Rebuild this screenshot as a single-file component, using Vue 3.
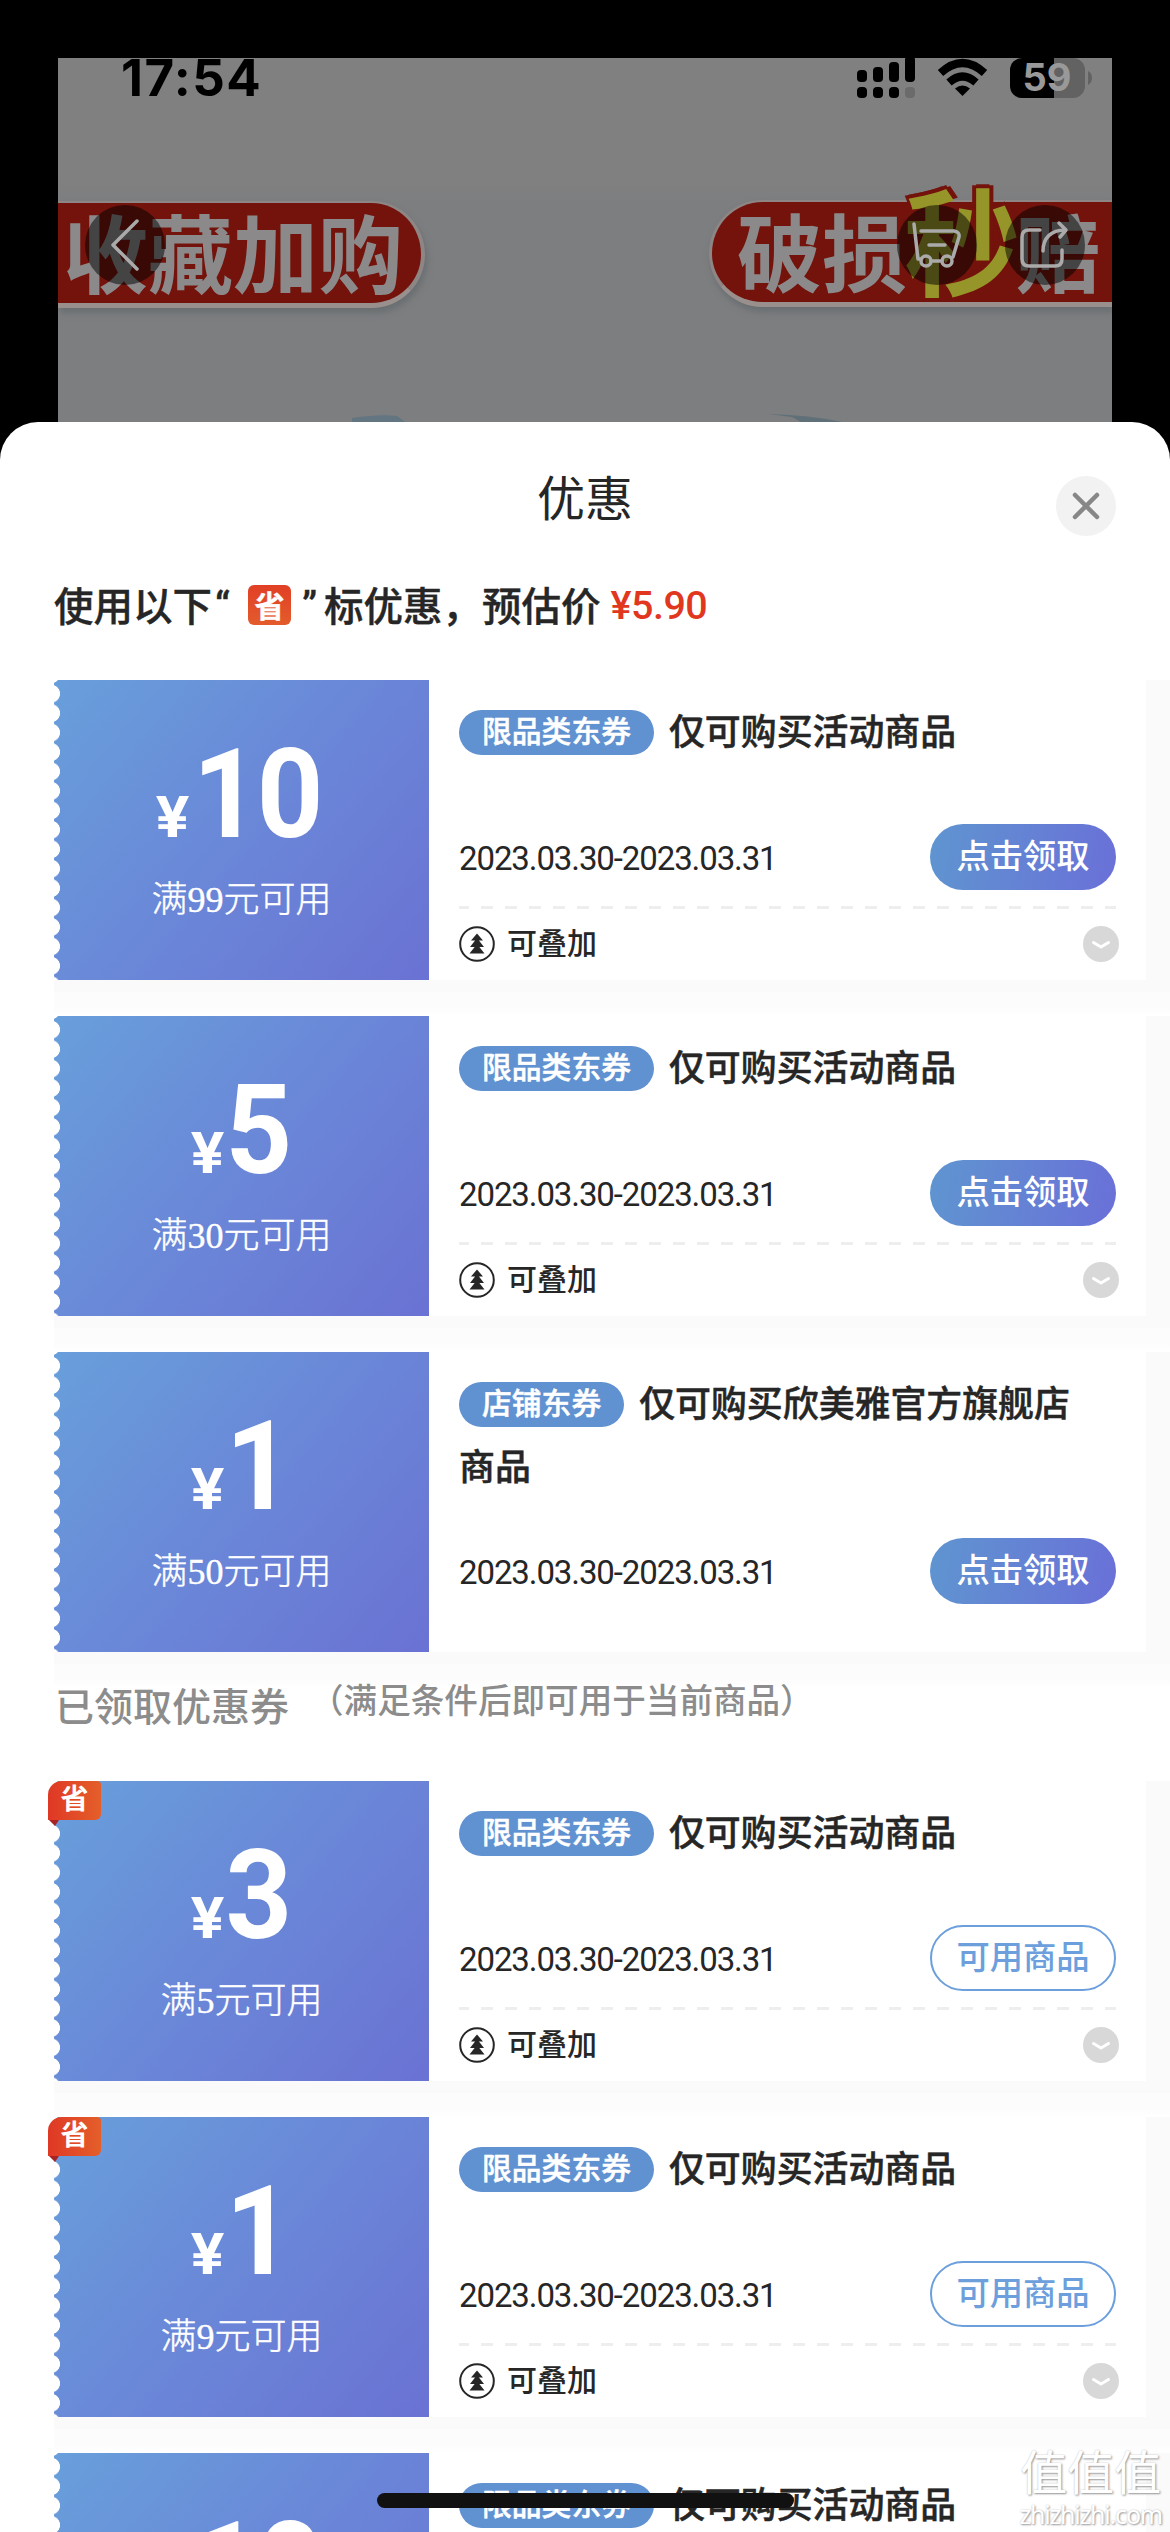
<script setup>
import { ref } from 'vue'

// Cupones por reclamar
const disponibles = ref([
  { id: 1, valor: 10, minimo: 99, tipo: '限品类东券', titulo: '仅可购买活动商品', apilable: true },
  { id: 2, valor: 5, minimo: 30, tipo: '限品类东券', titulo: '仅可购买活动商品', apilable: true },
  { id: 3, valor: 1, minimo: 50, tipo: '店铺东券', titulo: '仅可购买欣美雅官方旗舰店商品', apilable: false }
])

// Cupones ya reclamados
const reclamados = ref([
  { id: 4, valor: 3, minimo: 5, tipo: '限品类东券', titulo: '仅可购买活动商品', apilable: true, ahorro: true },
  { id: 5, valor: 1, minimo: 9, tipo: '限品类东券', titulo: '仅可购买活动商品', apilable: true, ahorro: true },
  { id: 6, valor: 10, minimo: 99, tipo: '限品类东券', titulo: '仅可购买活动商品', apilable: true }
])

const grupos = [
  { nombre: 'disponibles', cupones: disponibles, boton: '点击领取' },
  { nombre: 'reclamados', cupones: reclamados, boton: '可用商品' }
]

const fechas = '2023.03.30-2023.03.31'
</script>

<template>
  <div class="pantalla">
    <!-- Fondo oscurecido -->
    <div class="fondo">
      <div class="estado">
        <span class="hora">17:54</span>
        <svg class="iconos" width="236" height="42" viewBox="856 58 236 42">
          <g fill="#000">
            <rect x="856" y="70" width="10" height="12" rx="4" />
            <rect x="872" y="67" width="10" height="15" rx="4" />
            <rect x="888" y="62" width="10" height="20" rx="4" />
            <rect x="904" y="56" width="10" height="26" rx="4" />
            <rect x="856" y="87" width="10" height="11" rx="4" />
            <rect x="872" y="87" width="10" height="11" rx="4" />
            <rect x="888" y="87" width="10" height="11" rx="4" />
          </g>
          <rect x="904" y="87" width="10" height="11" rx="4" fill="#6b6b6b" />
          <g fill="none" stroke="#000" stroke-width="8">
            <path d="M939.500 73 Q961.500 53 983.500 73" />
            <path d="M948 82.500 Q961.500 70.500 975 82.500" />
          </g>
          <path d="M954 88.500 Q961.500 82.500 969 88.500 L961.500 96 Z" fill="#000" />
          <path d="M1021 58 H1072 a12 12 0 0 1 12 12 V86 a12 12 0 0 1 -12 12 H1053 V58 Z" fill="#626262" />
          <path d="M1053 58 H1021 a12 12 0 0 0 -12 12 V86 a12 12 0 0 0 12 12 H1053 Z" fill="#000" />
          <path d="M1087 71 q4 2 4 7 t-4 7 Z" fill="#626262" />
          <text x="1046" y="91" class="bateria" text-anchor="middle">59</text>
        </svg>
      </div>

      <div class="carteles">
        <div class="cartel izquierdo">收藏加购</div>
        <div class="cartel derecho">破损<span class="rapido">秒</span>赔</div>
      </div>

      <svg class="manchas" width="1053" height="10" viewBox="58 412 1053 10">
        <path d="M352 418 Q380 414 397 416 L405 422 H352 Z" fill="#637580" />
        <path d="M768 414 Q810 415 842 422 H801 L792 417 Z" fill="#5f7079" />
      </svg>

      <button class="circulo atras">
        <svg width="80" height="80" viewBox="0 0 80 80"><path d="M52 16 L28 40 L52 64" /></svg>
      </button>
      <button class="circulo carrito">
        <svg width="80" height="80" viewBox="0 0 80 80">
          <path d="M17 19 L21 54 H24 M24 26 H57 Q63 27 62 32 L56 52 M32 40 H48 M34 56 H45" />
          <circle cx="29" cy="56" r="5" />
          <circle cx="50" cy="56" r="5" />
        </svg>
      </button>
      <button class="circulo compartir">
        <svg width="80" height="80" viewBox="0 0 80 80">
          <path d="M35 25 H24 Q17 25 17 32 V54 Q17 61 24 61 H50 Q57 61 57 54 V45" />
          <path d="M38 46 C38 33 46 25 60 25 M54 18 L61 25 L55 32" />
        </svg>
      </button>
    </div>

    <!-- Hoja de ofertas -->
    <div class="hoja">
      <header class="cabecera">
        <h1>优惠</h1>
        <button class="cerrar">
          <svg width="60" height="60" viewBox="0 0 60 60"><path d="M19 19 L41 41 M41 19 L19 41" /></svg>
        </button>
      </header>

      <p class="resumen">
        <span>使用以下</span><span class="abre">“</span><b class="sello">省</b><span class="cierra">”</span><span>标优惠，预估价</span><span class="precio">¥5.90</span>
      </p>

      <section v-for="grupo in grupos" :key="grupo.nombre" :class="grupo.nombre">
        <h2 v-if="grupo.nombre === 'reclamados'">
          已领取优惠券<small>（满足条件后即可用于当前商品）</small>
        </h2>

        <article v-for="cupon in grupo.cupones.value" :key="cupon.id" class="cupon">
          <div class="importe">
            <b v-if="cupon.ahorro" class="cinta">省</b>
            <div class="valor">
              <span class="yuan">¥</span><span class="cifra">{{ cupon.valor }}</span>
            </div>
            <div class="minimo">满{{ cupon.minimo }}元可用</div>
          </div>
          <div class="detalle">
            <div class="titulo" :class="{ alto: !cupon.apilable }">
              <span class="tipo">{{ cupon.tipo }}</span>{{ cupon.titulo }}
            </div>
            <div class="fila">
              <span class="fechas">{{ fechas }}</span>
              <button class="accion">{{ grupo.boton }}</button>
            </div>
            <div v-if="cupon.apilable" class="pie">
              <svg width="36" height="36" viewBox="0 0 36 36">
                <circle cx="18" cy="18" r="16.800" fill="none" stroke="#262626" stroke-width="2" />
                <path d="M18 7.500 L24 14.500 H12 Z M18 12 L25 21 H11 Z M18 18 L25.500 27.500 H10.500 Z" fill="#262626" />
              </svg>
              <span>可叠加</span>
              <svg class="flecha" width="36" height="36" viewBox="0 0 36 36">
                <circle cx="18" cy="18" r="18" fill="#d8d8d8" />
                <path d="M10.500 16.500 L18 21 L25.500 16.500" fill="none" stroke="#fff" stroke-width="3" stroke-linecap="round" stroke-linejoin="round" />
              </svg>
            </div>
          </div>
        </article>
      </section>
    </div>

    <div class="inicio"></div>
    <div class="marca">
      <span class="marca-nombre">值值值</span>
      <span class="marca-web">zhizhizhi.com</span>
    </div>
  </div>
</template>

<style>
body {
  background: #000;
}
</style>

<style scoped>
.pantalla {
  position: relative;
  width: 1170px;
  height: 2532px;
  overflow: hidden;
  background: #000;
  color: #262626;
  font-family: Roboto, "Noto Sans CJK SC", sans-serif;
}

button {
  border: 0;
  padding: 0;
  font-family: inherit;
}

/* Fondo */
.fondo {
  position: relative;
  box-sizing: border-box;
  height: 422px;
  margin: 0 58px;
  border-top: 58px solid #000;
  background: linear-gradient(#808080 0, #808080 120px, #7d7e80 150px, #7d7e7f 100%);
  overflow: hidden;
}

.estado {
  display: flex;
  justify-content: space-between;
  height: 42px;
  padding: 0 19px 0 63px;
}

.hora {
  margin-top: -1px;
  font: 700 51px/42px Inter, sans-serif;
  color: #000;
  letter-spacing: 1.400px;
}

.bateria {
  font: 700 38px Inter, sans-serif;
  fill: #999;
}

.carteles {
  display: flex;
  justify-content: space-between;
  align-items: flex-start;
  padding-top: 100px;
}

.cartel {
  box-sizing: border-box;
  height: 107px;
  border: 2px solid #8d8685;
  border-bottom: 5px solid #99908e;
  background: #73130c;
  box-shadow: 2px 5px 6px #56606480;
  color: #8b8989;
  font: 700 85px/93px "Noto Sans CJK SC", sans-serif;
  white-space: nowrap;
}

.izquierdo {
  width: 367px;
  margin-top: 1px;
  padding-left: 5px;
  border-left: 0;
  border-right-width: 4px;
  border-radius: 0 54px 54px 0;
}

.derecho {
  display: flex;
  width: 403px;
  padding-left: 25px;
  border-right: 0;
  border-left-width: 3px;
  border-radius: 54px 0 0 54px;
}

.rapido {
  width: 112px;
  margin: -12px 0 0 -3px;
  color: #96952a;
  font-size: 116px;
  text-shadow: 0 -4px #73130c, 4px -3px #73130c, -4px -3px #73130c;
}

.manchas {
  position: absolute;
  left: 0;
  bottom: 0;
}

.circulo {
  position: absolute;
  top: 147px;
  width: 80px;
  height: 80px;
  border-radius: 50%;
  background: rgba(0, 0, 0, 0.5);
}

.circulo svg,
.cerrar svg {
  display: block;
  fill: none;
  stroke: #aaa;
  stroke-width: 3.5;
  stroke-linecap: round;
  stroke-linejoin: round;
}

.atras {
  left: 27px;
}

.carrito {
  left: 839px;
}

.compartir {
  left: 947px;
}

/* Hoja */
.hoja {
  height: 2110px;
  border-radius: 38px 38px 0 0;
  background: #fff;
  overflow: hidden;
}

.cabecera {
  display: grid;
  grid-template-columns: 1fr auto 1fr;
  align-items: center;
  height: 168px;
  padding: 0 54px;
}

h1 {
  grid-column: 2;
  margin: 0 0 22px;
  font-size: 48px;
  font-weight: 400;
}

.cerrar {
  justify-self: end;
  width: 60px;
  height: 60px;
  border-radius: 50%;
  background: #f2f2f2;
}

.cerrar svg {
  stroke: #878787;
  stroke-width: 4.5;
}

.resumen {
  display: flex;
  align-items: center;
  height: 32px;
  margin: 0;
  padding: 0 54px 58px;
  font: 500 39.500px/32px "Noto Sans CJK SC", sans-serif;
  -webkit-text-stroke: 0.4px;
}

.resumen > span {
  margin-top: -5px;
}

.resumen > .abre,
.resumen > .cierra {
  width: 22px;
  margin-top: 0;
  font-family: Roboto, sans-serif;
}

.abre {
  padding-left: 3px;
}

.sello {
  width: 43px;
  height: 40px;
  margin: -2px 11px 0;
  border-radius: 6px;
  background: linear-gradient(#e13f25, #e35c2c);
  color: #fff;
  font-size: 30px;
  line-height: 38px;
  text-align: center;
}

.resumen > .precio {
  margin: 0 0 0 10px;
  color: #e1371f;
  font-family: Roboto, sans-serif;
  letter-spacing: -0.5px;
  -webkit-text-stroke: 0;
}

h2 {
  display: flex;
  align-items: flex-start;
  height: 93px;
  margin: 0;
  padding-left: 55px;
  color: #8c8c8c;
  font-size: 39px;
  font-weight: 500;
  line-height: 40px;
}

h2 small {
  margin-left: 21px;
  font-size: 33.600px;
  line-height: 28px;
}

/* Cupones */
.cupon {
  display: flex;
  box-sizing: border-box;
  height: 336px;
  margin-left: 54px;
  padding-right: 24px;
  background: linear-gradient(#fafafa 312px, #fcfcfc 312px, #fcfcfc 328px, #fff 336px);
}

.importe {
  position: relative;
  box-sizing: border-box;
  width: 375px;
  height: 300px;
  padding-top: 50px;
  background: linear-gradient(130deg, #689fdb, #6a88d8 48%, #6a72d3);
  color: #fff;
  text-align: center;
}

/* Borde troquelado */
.importe::before {
  content: '';
  position: absolute;
  inset: 0 auto 0 0;
  width: 7px;
  background: radial-gradient(circle at -3px 9.700px, #fff 8.700px, transparent 9.300px) 0 4px / 7px 19.450px;
}

.valor {
  display: flex;
  justify-content: center;
  align-items: baseline;
  height: 130px;
  font-weight: 700;
  line-height: 130px;
}

.yuan {
  font-size: 58px;
  transform: scaleX(1.08);
}

.cifra {
  font-size: 125px;
  letter-spacing: -3px;
  transform: scaleX(0.93);
}

.minimo {
  height: 80px;
  font: 300 36px/80px "Liberation Serif", "Noto Sans CJK SC", serif;
  -webkit-text-stroke: 0.4px;
}

.cinta {
  position: absolute;
  top: 0;
  left: -6px;
  width: 53px;
  height: 39px;
  border-radius: 14px 4px 6px 0;
  background: linear-gradient(90deg, #df3825, #e45f2a);
  font-size: 28px;
  line-height: 38px;
}

.cinta::after {
  content: '';
  position: absolute;
  top: 39px;
  left: 1px;
  border-top: 6px solid #a82323;
  border-left: 6px solid transparent;
  border-right: 4px solid transparent;
}

.detalle {
  display: flex;
  flex-direction: column;
  box-sizing: border-box;
  flex: 1;
  height: 300px;
  padding: 22px 30px 0;
  background: #fff;
}

.titulo {
  height: 122px;
  padding-right: 30px;
  font-size: 35.900px;
  font-weight: 500;
  line-height: 63px;
  -webkit-text-stroke: 0.5px;
}

.alto {
  height: 164px;
}

.tipo {
  display: inline-block;
  height: 45px;
  margin-right: 15px;
  padding: 0 23px;
  border-radius: 23px;
  background: #6091d0;
  color: #fff;
  font-size: 29.800px;
  line-height: 44px;
  vertical-align: 3px;
}

.fila {
  display: flex;
  justify-content: space-between;
  align-items: center;
  height: 66px;
}

.fechas {
  padding-top: 3px;
  font-size: 33px;
  letter-spacing: -1.100px;
}

.accion {
  box-sizing: border-box;
  width: 186px;
  height: 66px;
  border-radius: 33px;
  background: linear-gradient(100deg, #5f95d0, #6a70d8);
  color: #fff;
  font-size: 33.300px;
  font-weight: 500;
  line-height: 64px;
}

.reclamados .accion {
  border: 2px solid #6c9fdc;
  background: #fff;
  color: #6c9fdc;
  line-height: 60px;
}

.pie {
  display: flex;
  align-items: center;
  gap: 12px;
  margin-top: 16px;
  padding-top: 20px;
  background: repeating-linear-gradient(90deg, #eee 0 10px, #fff 10px 22px, #eee 22px 24px) 0 0 / 100% 3px no-repeat;
  font-size: 30px;
  font-weight: 500;
  line-height: 36px;
}

.flecha {
  margin: 0 -3px 0 auto;
}

/* Barra de inicio y marca de agua */
.inicio {
  position: absolute;
  top: 2493px;
  left: 377px;
  width: 417px;
  height: 15px;
  border-radius: 8px;
  background: #111;
}

.marca {
  position: absolute;
  right: 8px;
  bottom: 3px;
  display: flex;
  flex-direction: column;
  align-items: center;
  color: #fff;
  text-shadow: 1px 1px 2px #999, 0 0 2px #ccc;
}

.marca-nombre {
  font-size: 47px;
  line-height: 50px;
}

.marca-web {
  font: 25px/30px "Noto Sans", sans-serif;
  letter-spacing: -1.200px;
}
</style>
